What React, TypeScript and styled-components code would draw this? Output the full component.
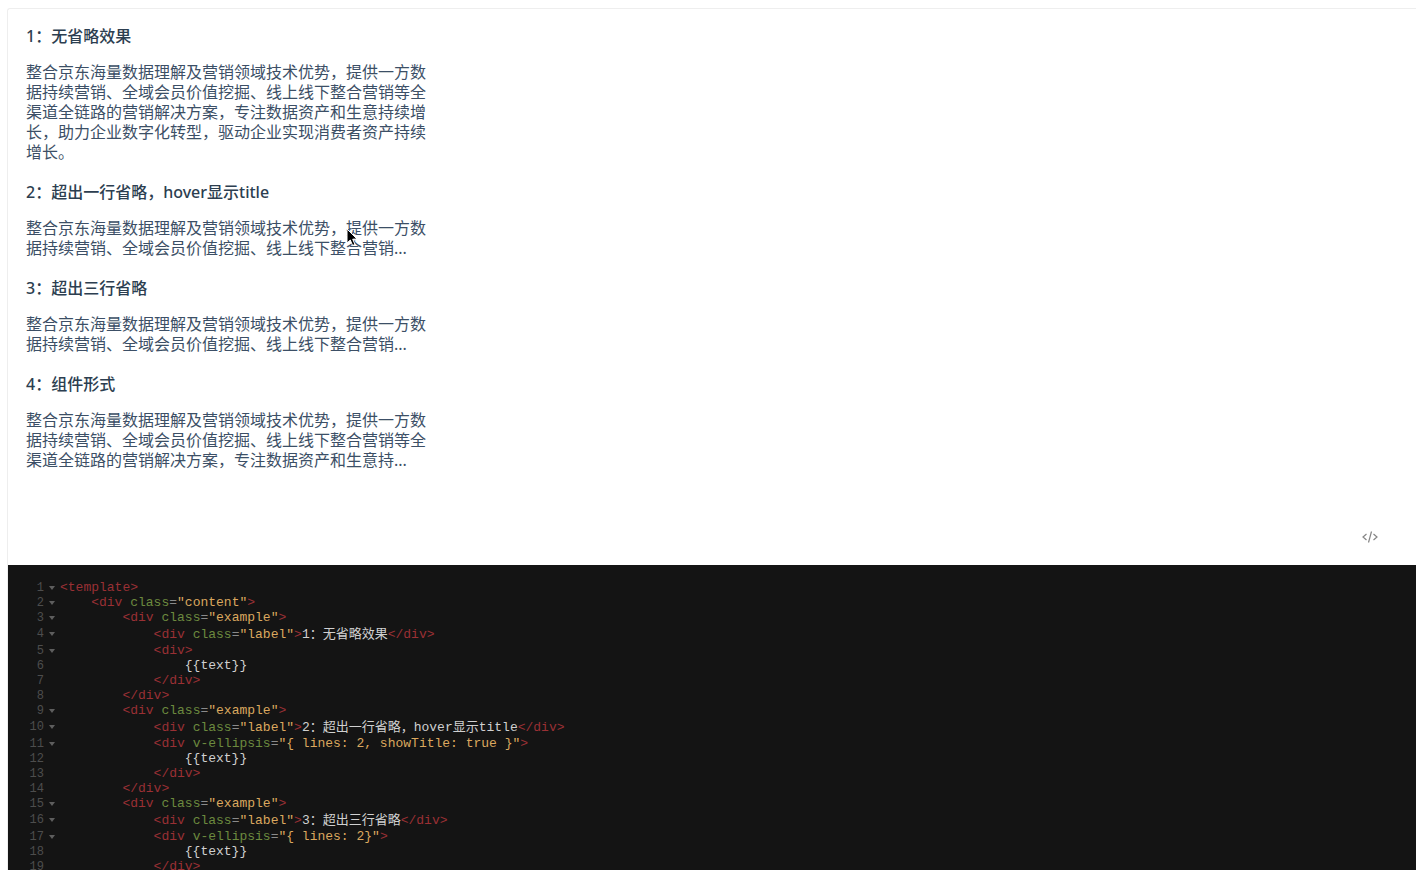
import React from 'react';
import styled, { createGlobalStyle } from 'styled-components';

const GlobalStyle = createGlobalStyle`
  html, body {
    margin: 0;
    padding: 0;
    height: 870px;
    overflow: hidden;
    background: #fff;
  }
`;

const text =
  '整合京东海量数据理解及营销领域技术优势，提供一方数据持续营销、全域会员价值挖掘、线上线下整合营销等全渠道全链路的营销解决方案，专注数据资产和生意持续增长，助力企业数字化转型，驱动企业实现消费者资产持续增长。';

const examples = [
  { label: '1：无省略效果', body: text },
  { label: '2：超出一行省略，hover显示title', body: text.slice(0, 48) + '...' },
  { label: '3：超出三行省略', body: text.slice(0, 48) + '...' },
  { label: '4：组件形式', body: text.slice(0, 73) + '...' },
];

type Kind = 'tag' | 'attr' | 'eq' | 'str' | 'plain';
type Piece = [Kind, string];
type Line = { indent: number; fold?: boolean; cjk?: boolean; pieces: Piece[] };

const open = (attr: string, value: string): Piece[] => [
  ['tag', '<div'],
  ['plain', ' '],
  ['attr', attr],
  ['eq', '='],
  ['str', `"${value}"`],
  ['tag', '>'],
];

const lines: Line[] = [
  { indent: 0, fold: true, pieces: [['tag', '<template>']] },
  { indent: 1, fold: true, pieces: open('class', 'content') },
  { indent: 2, fold: true, pieces: open('class', 'example') },
  {
    indent: 3,
    fold: true,
    cjk: true,
    pieces: [...open('class', 'label'), ['plain', '1：无省略效果'], ['tag', '</div>']],
  },
  { indent: 3, fold: true, pieces: [['tag', '<div>']] },
  { indent: 4, pieces: [['plain', '{{text}}']] },
  { indent: 3, pieces: [['tag', '</div>']] },
  { indent: 2, pieces: [['tag', '</div>']] },
  { indent: 2, fold: true, pieces: open('class', 'example') },
  {
    indent: 3,
    fold: true,
    cjk: true,
    pieces: [...open('class', 'label'), ['plain', '2：超出一行省略，hover显示title'], ['tag', '</div>']],
  },
  { indent: 3, fold: true, pieces: open('v-ellipsis', '{ lines: 2, showTitle: true }') },
  { indent: 4, pieces: [['plain', '{{text}}']] },
  { indent: 3, pieces: [['tag', '</div>']] },
  { indent: 2, pieces: [['tag', '</div>']] },
  { indent: 2, fold: true, pieces: open('class', 'example') },
  {
    indent: 3,
    fold: true,
    cjk: true,
    pieces: [...open('class', 'label'), ['plain', '3：超出三行省略'], ['tag', '</div>']],
  },
  { indent: 3, fold: true, pieces: open('v-ellipsis', '{ lines: 2}') },
  { indent: 4, pieces: [['plain', '{{text}}']] },
  { indent: 3, pieces: [['tag', '</div>']] },
];

const App = () => {
  return (
    <Page>
      <GlobalStyle />
      <Card>
        <Examples>
          {examples.map((el) => (
            <Example key={el.label}>
              <Label>{el.label}</Label>
              <Paragraph>{el.body}</Paragraph>
            </Example>
          ))}
        </Examples>
        <Toolbar>
          <svg width="16" height="12" viewBox="0 0 16 12" fill="none" stroke="#858585" strokeWidth="1.2">
            <path d="M4.5 3 L1 6 L4.5 9" />
            <path d="M11.5 3 L15 6 L11.5 9" />
            <path d="M9.5 0.5 L6.5 11.5" />
          </svg>
        </Toolbar>
        <CodeBlock>
          {lines.map((line, idx) => (
            <CodeLine key={idx} $cjk={line.cjk}>
              <LineNumber>{idx + 1}</LineNumber>
              <FoldSlot>{line.fold && <FoldArrow />}</FoldSlot>
              <CodeText $indent={line.indent}>
                {line.pieces.map(([kind, value], i) => (
                  <Token key={i} $kind={kind}>
                    {value}
                  </Token>
                ))}
              </CodeText>
            </CodeLine>
          ))}
        </CodeBlock>
      </Card>
      <Cursor width="13" height="19" viewBox="0 0 13 19">
        <path d="M1 1 L1 15 L4.3 12 L6.6 17.5 L9 16.5 L6.7 11.2 L11 11 Z" fill="#000" stroke="#fff" strokeWidth="1" />
      </Cursor>
    </Page>
  );
};

const tokenColors: Record<Kind, string> = {
  tag: '#9a3034',
  attr: '#6c8a3f',
  eq: '#8a8a8a',
  str: '#dba85f',
  plain: '#d0d0d0',
};

const Page = styled.div`
  position: relative;
  height: 870px;
  padding: 8px 0 0 7px;
  box-sizing: border-box;
  overflow: hidden;
`;

const Card = styled.div`
  border: 1px solid #eeeeee;
  border-right: 0;
  border-bottom: 0;
  border-top-left-radius: 3px;
  height: 862px;
  box-sizing: border-box;
  display: flex;
  flex-direction: column;
  overflow: hidden;
`;

const Examples = styled.div`
  height: 498px;
  padding: 17px 0 0 18px;
  box-sizing: border-box;
  font-family: 'Noto Sans', 'Noto Sans CJK SC', sans-serif;
`;

const Example = styled.div`
  width: 400px;
  margin-bottom: 20px;
`;

const Label = styled.div`
  height: 20px;
  margin-bottom: 16px;
  font-size: 16px;
  line-height: 20px;
  font-weight: 500;
  color: #2c3e50;
`;

const Paragraph = styled.div`
  font-size: 16px;
  line-height: 20px;
  color: #3c4f66;
`;

const Toolbar = styled.div`
  height: 58px;
  padding: 2px 38px 0 0;
  display: flex;
  justify-content: flex-end;
  align-items: center;
  box-sizing: border-box;
`;

const CodeBlock = styled.div`
  flex: 1;
  padding-top: 15px;
  background: #141414;
  overflow: hidden;
`;

const CodeLine = styled.div<{ $cjk?: boolean }>`
  height: ${(p) => (p.$cjk ? '18px' : '15px')};
  display: flex;
  align-items: center;
`;

const LineNumber = styled.div`
  width: 36px;
  text-align: right;
  font-family: 'Liberation Mono', monospace;
  font-size: 12px;
  color: #4d4d4d;
`;

const FoldSlot = styled.div`
  width: 16px;
  display: flex;
  justify-content: center;
`;

const FoldArrow = styled.div`
  width: 0;
  height: 0;
  border-left: 3px solid transparent;
  border-right: 3px solid transparent;
  border-top: 4px solid #5e5e5e;
`;

const CodeText = styled.div<{ $indent: number }>`
  padding-left: ${(p) => p.$indent * 31.2}px;
  white-space: pre;
  font-family: 'Liberation Mono', 'Noto Sans CJK SC', monospace;
  font-size: 13px;
  line-height: 15px;
`;

const Token = styled.span<{ $kind: Kind }>`
  color: ${(p) => tokenColors[p.$kind]};
`;

const Cursor = styled.svg`
  position: absolute;
  left: 346px;
  top: 228px;
`;

export default App;
